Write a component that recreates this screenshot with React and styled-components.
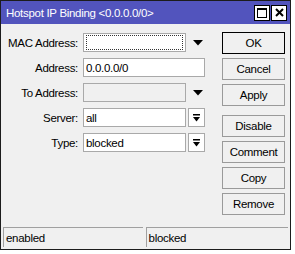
import React from 'react';
import styled, { createGlobalStyle } from 'styled-components';

const Global = createGlobalStyle`
  body {
    margin: 0;
    background: #ffffff;
    font-family: "Liberation Sans", Arial, sans-serif;
    font-size: 11.5px;
    letter-spacing: -0.3px;
  }
`;

const Window = styled.div`
  width: 291px;
  height: 250px;
  box-sizing: border-box;
  border: 1px solid #1c1c1c;
  background: #f0f0f0;
  display: flex;
  flex-direction: column;
`;

const TitleBar = styled.div`
  height: 23px;
  background: #5254bd;
  color: #fff;
  display: flex;
  align-items: center;
  padding: 0 3px 0 5px;
  font-size: 11.5px;
`;

const Title = styled.div`
  flex: 1;
`;

const TitleBtn = styled.div`
  width: 14px;
  height: 14px;
  border: 1px solid #000;
  background: #fff;
  display: flex;
  align-items: center;
  justify-content: center;
  margin-left: 1px;
`;

const Body = styled.div`
  flex: 1;
  display: flex;
  padding: 8px 0 0 0;
`;

const Form = styled.div`
  width: 218px;
  display: flex;
  flex-direction: column;
  gap: 6px;
  padding-top: 1px;
`;

const Row = styled.div`
  display: flex;
  align-items: center;
  height: 19px;
`;

const Label = styled.div`
  width: 77px;
  text-align: right;
  color: #000;
  margin-right: 5px;
`;

const Field = styled.div`
  width: ${p => p.w}px;
  height: 19px;
  box-sizing: border-box;
  border: 1px solid #a9a9a9;
  background: ${p => (p.disabled ? '#f0f0f0' : '#fff')};
  display: flex;
  align-items: center;
  padding: 0 2px;
  color: #000;
`;

const Focus = styled.div`
  flex: 1;
  height: 13px;
  border: 1px dotted #333;
`;

const Arrow = styled.div`
  width: 19px;
  display: flex;
  justify-content: center;
  margin-left: 2px;
`;

const DropBtn = styled.div`
  width: 17px;
  height: 19px;
  box-sizing: border-box;
  border: 1px solid #a9a9a9;
  background: #fff;
  margin-left: 2px;
  display: flex;
  align-items: center;
  justify-content: center;
`;

const Buttons = styled.div`
  display: flex;
  flex-direction: column;
  margin-left: 3px;
`;

const Button = styled.div`
  width: 63px;
  height: 22px;
  box-sizing: border-box;
  border: 1px solid ${p => (p.primary ? '#000' : '#9a9a9a')};
  background: #f0f0f0;
  display: flex;
  align-items: center;
  justify-content: center;
  margin-top: ${p => p.gap}px;
  color: #000;
`;

const StatusBar = styled.div`
  display: flex;
  gap: 3px;
  padding: 0 2px 2px 2px;
`;

const Panel = styled.div`
  flex: ${p => p.grow};
  height: 20px;
  box-sizing: border-box;
  border-top: 1px solid #a0a0a0;
  border-left: 1px solid #a0a0a0;
  display: flex;
  align-items: center;
  padding-left: 2px;
  color: #000;
`;

const TriDown = () => (
  <svg width="10" height="6" viewBox="0 0 10 6">
    <path d="M0 0 H10 L5 5.5 Z" fill="#000" />
  </svg>
);

const BarArrow = () => (
  <svg width="7" height="8" viewBox="0 0 7 8">
    <rect x="0" y="0" width="7" height="1.5" fill="#000" />
    <path d="M0 3 H7 L3.5 7.5 Z" fill="#000" />
  </svg>
);

function App() {
  return (
    <>
      <Global />
      <Window>
        <TitleBar>
          <Title>Hotspot IP Binding &lt;0.0.0.0/0&gt;</Title>
          <TitleBtn>
            <svg width="10" height="10" viewBox="0 0 10 10">
              <rect x="0.5" y="0.5" width="9" height="9" fill="none" stroke="#000" />
              <rect x="0.5" y="0.5" width="9" height="1.5" fill="#000" />
            </svg>
          </TitleBtn>
          <TitleBtn>
            <svg width="9" height="9" viewBox="0 0 9 9">
              <path d="M1 1 L8 8 M8 1 L1 8" stroke="#000" strokeWidth="2" />
            </svg>
          </TitleBtn>
        </TitleBar>
        <Body>
          <Form>
            <Row>
              <Label>MAC Address:</Label>
              <Field w={103}><Focus /></Field>
              <Arrow><TriDown /></Arrow>
            </Row>
            <Row>
              <Label>Address:</Label>
              <Field w={122}>0.0.0.0/0</Field>
            </Row>
            <Row>
              <Label>To Address:</Label>
              <Field w={103} disabled />
              <Arrow><TriDown /></Arrow>
            </Row>
            <Row>
              <Label>Server:</Label>
              <Field w={103}>all</Field>
              <DropBtn><BarArrow /></DropBtn>
            </Row>
            <Row>
              <Label>Type:</Label>
              <Field w={103}>blocked</Field>
              <DropBtn><BarArrow /></DropBtn>
            </Row>
          </Form>
          <Buttons>
            <Button primary gap={0}>OK</Button>
            <Button gap={4}>Cancel</Button>
            <Button gap={4}>Apply</Button>
            <Button gap={9}>Disable</Button>
            <Button gap={4}>Comment</Button>
            <Button gap={4}>Copy</Button>
            <Button gap={4}>Remove</Button>
          </Buttons>
        </Body>
        <StatusBar>
          <Panel grow={139}>enabled</Panel>
          <Panel grow={142}>blocked</Panel>
        </StatusBar>
      </Window>
    </>
  );
}

export default App;
